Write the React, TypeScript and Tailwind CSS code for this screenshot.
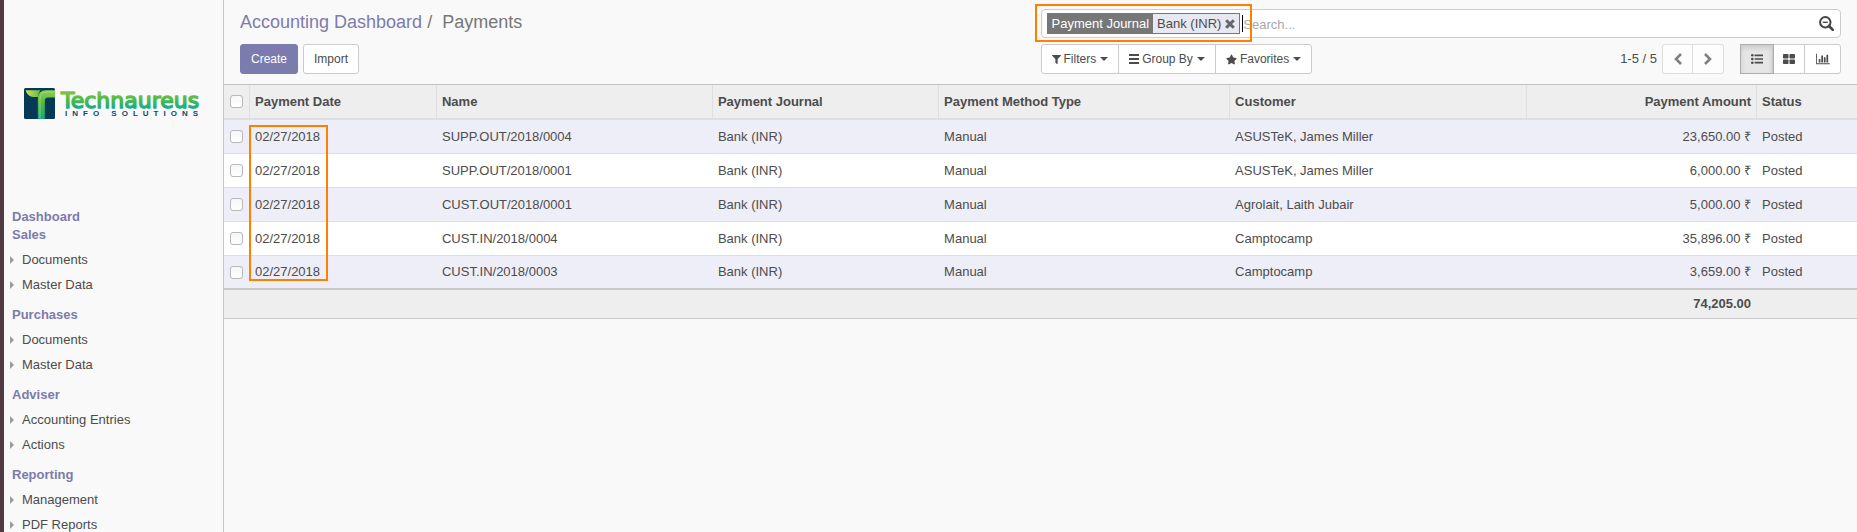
import React from 'react';
import { FaFilter, FaStar } from 'react-icons/fa';

type MenuSection = { title: string; items: string[] };

const sections: MenuSection[] = [
  { title: 'Sales', items: ['Documents', 'Master Data'] },
  { title: 'Purchases', items: ['Documents', 'Master Data'] },
  { title: 'Adviser', items: ['Accounting Entries', 'Actions'] },
  { title: 'Reporting', items: ['Management', 'PDF Reports'] },
];

const payments = [
  { date: '02/27/2018', name: 'SUPP.OUT/2018/0004', customer: 'ASUSTeK, James Miller', amount: '23,650.00 ₹' },
  { date: '02/27/2018', name: 'SUPP.OUT/2018/0001', customer: 'ASUSTeK, James Miller', amount: '6,000.00 ₹' },
  { date: '02/27/2018', name: 'CUST.OUT/2018/0001', customer: 'Agrolait, Laith Jubair', amount: '5,000.00 ₹' },
  { date: '02/27/2018', name: 'CUST.IN/2018/0004', customer: 'Camptocamp', amount: '35,896.00 ₹' },
  { date: '02/27/2018', name: 'CUST.IN/2018/0003', customer: 'Camptocamp', amount: '3,659.00 ₹' },
];

function Logo() {
  return (
    <div className="flex">
      <svg viewBox="0 0 31 34" className="h-[34px] w-[31px] shrink-0" aria-hidden="true">
        <defs>
          <linearGradient id="stem" x1="0" y1="0" x2="0" y2="1">
            <stop offset="0" stopColor="#8ed04b" />
            <stop offset="0.5" stopColor="#4cb748" />
            <stop offset="1" stopColor="#12a883" />
          </linearGradient>
          <linearGradient id="leaf" x1="0" y1="0" x2="1" y2="0">
            <stop offset="0" stopColor="#d2e05a" />
            <stop offset="1" stopColor="#5cba47" />
          </linearGradient>
        </defs>
        <rect x="0" y="2" width="31" height="31" rx="1.5" fill="#043a56" />
        <path d="M1.5 4.200H16.500Q14 7 14 11H9.500Q3.500 10.500 1.500 4.200Z" fill="url(#leaf)" />
        <path d="M31 4.200V11.500H24Q20.800 11.500 20.800 15V33H13.800V13Q13.800 4.200 22 4.200Z" fill="url(#stem)" />
        <path d="M30.500 6H22.500Q16 6 16 13V32" fill="none" stroke="#b9e07a" strokeWidth="1" opacity="0.7" />
      </svg>
      <div className="pl-1.5">
        <svg viewBox="0 0 152 24" className="block h-6 w-[152px] overflow-visible">
          <defs>
            <linearGradient id="word" gradientUnits="userSpaceOnUse" x1="0" y1="4" x2="0" y2="23">
              <stop offset="0" stopColor="#8cc63f" />
              <stop offset="0.5" stopColor="#4dba4a" />
              <stop offset="1" stopColor="#12ad8c" />
            </linearGradient>
          </defs>
          <text
            x="0"
            y="22"
            fontFamily="DejaVu Sans, sans-serif"
            fontSize="22"
            fill="url(#word)"
            stroke="url(#word)"
            strokeWidth="1.400"
            strokeLinejoin="round"
          >
            Technaureus
          </text>
        </svg>
        <div className="pl-1 text-[8px] leading-[8px] font-bold tracking-[5px] whitespace-nowrap text-[#0d4a6b]">
          INFO SOLUTIONS
        </div>
      </div>
    </div>
  );
}

function Caret() {
  return <span className="ml-1 inline-block border-x-4 border-t-4 border-x-transparent border-t-[#4c4c4c]" />;
}

function Chevron({ d }: { d: string }) {
  return (
    <svg viewBox="0 0 8 12" className="h-3 w-2" fill="none" stroke="#808080" strokeWidth="2.600">
      <path d={d} />
    </svg>
  );
}

function Sidebar() {
  return (
    <aside className="flex w-[220px] shrink-0 flex-col overflow-hidden border-r border-[#c4c4c4] bg-[#f9f9f9]">
      <a href="#home" className="block h-[208px] shrink-0 pt-[86px] pl-5">
        <Logo />
      </a>
      <nav className="text-[13px]">
        <a href="#dashboard" className="block pl-2 leading-[18px] font-bold text-[#7c7bad]">
          Dashboard
        </a>
        {sections.map((section) => (
          <section key={section.title} className="mb-[9px]">
            <h2 className="pl-2 leading-[18px] font-bold text-[#7c7bad]">{section.title}</h2>
            <ul className="mt-[3px]">
              {section.items.map((item) => (
                <li key={item}>
                  <a href="#menu" className="flex items-center gap-2 pl-1.5 leading-[25px]">
                    <span className="border-y-4 border-l-4 border-y-transparent border-l-[#9c9c9c]" />
                    {item}
                  </a>
                </li>
              ))}
            </ul>
          </section>
        ))}
      </nav>
    </aside>
  );
}

function SearchBar() {
  return (
    <div className="relative flex h-[29px] items-center rounded border border-[#ccc] bg-white pr-4 pl-[5px] text-[13px]">
      <div className="flex h-[21px] items-center border border-[#777] bg-[#e8e8f2]">
        <span className="flex h-full items-center bg-[#777] px-1 text-white">Payment Journal</span>
        <span className="px-1">Bank (INR)</span>
        <button type="button" aria-label="Remove filter" className="pr-1">
          <svg viewBox="0 0 10 10" className="size-[10px]" fill="none" stroke="#666" strokeWidth="3">
            <path d="M1.200 1.200L8.800 8.800M8.800 1.200L1.200 8.800" />
          </svg>
        </button>
      </div>
      <span className="ml-0.5 h-[17px] w-px bg-black" />
      <input
        type="text"
        aria-label="Search"
        placeholder="Search..."
        className="min-w-0 flex-1 bg-transparent pt-0.5 outline-none placeholder:text-[#a9a9a9]"
      />
      <button type="button" aria-label="Advanced search" className="-mr-2.5">
        <svg viewBox="0 0 15 15" className="size-[15px]" fill="none" stroke="#444" strokeWidth="2">
          <circle cx="6.300" cy="6.300" r="5.200" />
          <path d="M3.800 6.300H8.800" strokeWidth="1.300" />
          <path d="M10 10L13.800 13.800" strokeWidth="2.600" strokeLinecap="round" />
        </svg>
      </button>
      <div className="pointer-events-none absolute -top-1.5 -left-[7px] h-[38px] w-[217px] border-2 border-[#ff8000]" />
    </div>
  );
}

function ControlPanel() {
  return (
    <header className="flex h-[85px] border-b border-[#c4c4c4] bg-[#f9f9f9] pt-[9px]">
      <div className="w-1/2 pl-4">
        <nav aria-label="Breadcrumb" className="flex h-[35px] text-[18px] leading-[26px]">
          <a href="#dashboard" className="text-[#7c7bad]">
            Accounting Dashboard
          </a>
          <span className="px-[5px] text-[#777]">/</span>
          <span className="pl-[5px] text-[#777]">Payments</span>
        </nav>
        <div className="flex gap-[5px] text-[12px]">
          <button type="button" className="h-[30px] rounded-[3px] border border-[#7c7bad] bg-[#7c7bad] px-2.5 text-white">
            Create
          </button>
          <button type="button" className="h-[30px] rounded-[3px] border border-[#ccc] bg-white px-2.5">
            Import
          </button>
        </div>
      </div>
      <div className="w-1/2 pr-4">
        <SearchBar />
        <div className="mt-1.5 flex items-start justify-between text-[12px]">
          <div className="flex h-[30px] divide-x divide-[#ccc] rounded-[3px] border border-[#ccc] bg-white">
            <button type="button" className="flex items-center px-2.5">
              <FaFilter className="mr-[3px] size-[9px]" />
              Filters
              <Caret />
            </button>
            <button type="button" className="flex items-center px-2.5">
              <svg viewBox="0 0 10 10" className="mr-[3px] size-2.5" fill="#4c4c4c">
                <path d="M0 0h10v2H0zM0 4h10v2H0zM0 8h10v2H0z" />
              </svg>
              Group By
              <Caret />
            </button>
            <button type="button" className="flex items-center px-2.5">
              <FaStar className="mr-[3px] size-[11px]" />
              Favorites
              <Caret />
            </button>
          </div>
          <div className="flex items-center">
            <span className="mr-[5px] text-[13px]">1-5 / 5</span>
            <div className="mr-4 flex h-[30px] divide-x divide-[#ddd] rounded-[3px] border border-[#ddd] bg-[#fdfdfd]">
              <button type="button" aria-label="Previous" className="flex w-[30px] items-center justify-center">
                <Chevron d="M7 1L2 6L7 11" />
              </button>
              <button type="button" aria-label="Next" className="flex w-[30px] items-center justify-center">
                <Chevron d="M1 1L6 6L1 11" />
              </button>
            </div>
            <div className="flex h-[30px] divide-x divide-[#ccc] rounded-[3px] border border-[#ccc] bg-white">
              <button
                type="button"
                aria-label="List view"
                className="flex w-8 items-center justify-center bg-[#e6e6e6] shadow-[inset_0_3px_5px_rgba(0,0,0,0.125)] outline outline-[#adadad]"
              >
                <svg viewBox="0 0 12 10" className="h-2.5 w-3" fill="#4c4c4c">
                  <circle cx="1.300" cy="1.300" r="1.300" />
                  <circle cx="1.300" cy="5" r="1.300" />
                  <circle cx="1.300" cy="8.700" r="1.300" />
                  <path d="M3.600 0.500h8.400v1.700h-8.400zM3.600 4.150h8.400v1.700h-8.400zM3.600 7.800h8.400v1.700h-8.400z" />
                </svg>
              </button>
              <button type="button" aria-label="Kanban view" className="flex w-8 items-center justify-center">
                <svg viewBox="0 0 12 10" className="h-2.5 w-3" fill="#4c4c4c">
                  <rect x="0" y="0" width="5.500" height="4.500" rx="0.800" />
                  <rect x="6.500" y="0" width="5.500" height="4.500" rx="0.800" />
                  <rect x="0" y="5.500" width="5.500" height="4.500" rx="0.800" />
                  <rect x="6.500" y="5.500" width="5.500" height="4.500" rx="0.800" />
                </svg>
              </button>
              <button type="button" aria-label="Graph view" className="flex w-[35px] items-center justify-center">
                <svg viewBox="0 0 2048 1792" className="h-3 w-3.5" fill="#4c4c4c">
                  <path d="M640 896v512h-256v-512h256zm384-512v1024h-256v-1024h256zm1024 1152v128h-2048v-1536h128v1408h1920zm-640-896v768h-256v-768h256zm384-384v1152h-256v-1152h256z" />
                </svg>
              </button>
            </div>
          </div>
        </div>
      </div>
    </header>
  );
}

function Tick({ label }: { label: string }) {
  return (
    <input
      type="checkbox"
      aria-label={label}
      className="block size-[13px] appearance-none rounded-[3px] border border-[#b8b8b8] bg-linear-to-b from-[#f6f6f6] to-white"
    />
  );
}

function PaymentsTable() {
  const head = 'border-l border-[#dfdfdf] px-[5px] text-left font-bold';
  return (
    <div className="relative">
      <table className="w-full table-fixed border-separate border-spacing-0 text-[13px] leading-[18px]">
        <colgroup>
          <col className="w-[25px]" />
          <col className="w-[11.450%]" />
          <col className="w-[16.900%]" />
          <col className="w-[13.850%]" />
          <col className="w-[17.820%]" />
          <col className="w-[18.190%]" />
          <col className="w-[14.080%]" />
          <col />
        </colgroup>
        <thead>
          <tr className="h-[35px] bg-[#eee] *:border-b-2 *:border-b-[#dfdfdf]">
            <th className="pl-1.5">
              <Tick label="Select all" />
            </th>
            <th className={head}>Payment Date</th>
            <th className={head}>Name</th>
            <th className={head}>Payment Journal</th>
            <th className={head}>Payment Method Type</th>
            <th className={head}>Customer</th>
            <th className="border-l border-[#dfdfdf] px-[5px] text-right font-bold">Payment Amount</th>
            <th className={head}>Status</th>
          </tr>
        </thead>
        <tbody>
          {payments.map((p) => (
            <tr
              key={p.name}
              className="h-[34px] bg-white odd:bg-[#eeeef8] *:border-b *:border-[#dfdfdf] last:*:border-b-2 last:*:border-[#c8c8c8]"
            >
              <td className="pl-1.5">
                <Tick label={`Select ${p.name}`} />
              </td>
              <td className="px-1.5">{p.date}</td>
              <td className="px-1.5">{p.name}</td>
              <td className="px-1.5">Bank (INR)</td>
              <td className="px-1.5">Manual</td>
              <td className="px-1.5">{p.customer}</td>
              <td className="px-[5px] text-right">{p.amount}</td>
              <td className="px-1.5">Posted</td>
            </tr>
          ))}
        </tbody>
        <tfoot>
          <tr className="h-[29px] bg-[#eee] font-bold *:border-b *:border-[#c8c8c8]">
            <td colSpan={6} />
            <td className="px-[5px] text-right">74,205.00</td>
            <td />
          </tr>
        </tfoot>
      </table>
      <div className="pointer-events-none absolute top-10 left-[25px] h-[156px] w-[79px] border-2 border-[#ff8000]" />
    </div>
  );
}

export default function App() {
  return (
    <div className="flex h-screen overflow-hidden border-l-4 border-[#4f3a40] bg-[#f9f9f9] font-['Liberation_Sans',Arial,sans-serif] text-[#4c4c4c]">
      <Sidebar />
      <main className="min-w-0 flex-1">
        <ControlPanel />
        <PaymentsTable />
      </main>
    </div>
  );
}
